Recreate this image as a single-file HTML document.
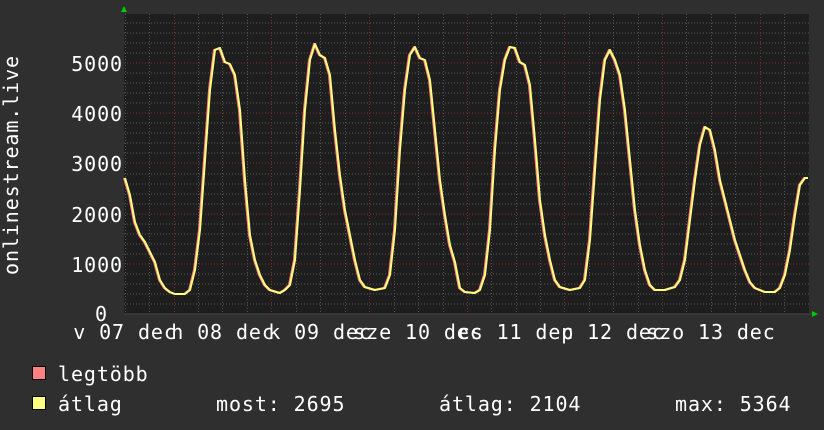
<!DOCTYPE html>
<html><head><meta charset="utf-8"><style>
html,body{margin:0;padding:0;background:#2f2f2f;width:824px;height:430px;overflow:hidden}
svg{display:block}
text{font-family:"DejaVu Sans Mono","Liberation Mono",monospace;font-size:20px;fill:#fff;letter-spacing:0.9px}
</style></head><body>
<svg width="824" height="430" xmlns="http://www.w3.org/2000/svg">
<rect width="824" height="430" fill="#2f2f2f"/>
<rect x="124" y="14" width="685" height="300" fill="#1e1e1e"/>
<g stroke="#555" stroke-width="1" stroke-dasharray="1,2" fill="none">
<path d="M124 304H809M124 294H809M124 284H809M124 274H809M124 254H809M124 244H809M124 234H809M124 224H809M124 204H809M124 194H809M124 184H809M124 174H809M124 153H809M124 143H809M124 133H809M124 123H809M124 103H809M124 93H809M124 83H809M124 73H809M124 53H809M124 43H809M124 33H809M124 23H809"/>
<path d="M125.5 14V314M149.5 14V314M198.5 14V314M222.5 14V314M247.5 14V314M296.5 14V314M320.5 14V314M345.5 14V314M394.5 14V314M418.5 14V314M443.5 14V314M491.5 14V314M516.5 14V314M540.5 14V314M589.5 14V314M613.5 14V314M638.5 14V314M686.5 14V314M711.5 14V314M735.5 14V314M784.5 14V314"/>
</g>
<g stroke="#7a3030" stroke-width="1" stroke-dasharray="1,2" fill="none">
<path d="M124 264H809M124 214H809M124 163H809M124 113H809M124 63H809"/>
<path d="M174.5 14V314M271.5 14V314M369.5 14V314M467.5 14V314M564.5 14V314M662.5 14V314M760.5 14V314"/>
</g>
<path d="M124 314H812" stroke="#444" stroke-width="1"/>
<polygon points="121,12 127,12 124,6" fill="#00cc00"/>
<polygon points="812,311 812,317 818,314" fill="#00cc00"/>
<g fill="none" stroke-linejoin="round">
<polyline stroke="#ff8080" stroke-width="2" transform="translate(-1,0)" points="125,178 130,195 135,222 140,235 145,242 150,252 155,262 160,280 165,288 170,292 175,294 185,294 190,290 195,270 200,230 205,160 210,90 215,50 220,48 225,62 230,64 235,75 240,110 245,180 250,235 255,260 260,275 265,285 270,290 280,293 285,290 290,285 295,260 300,190 305,110 310,60 315,44 320,55 325,58 330,75 335,130 340,175 345,210 350,235 355,260 360,280 365,287 375,290 385,288 390,275 395,230 400,150 405,90 410,55 415,47 420,58 425,60 430,80 435,130 440,180 445,215 450,245 455,262 460,288 465,292 475,293 480,290 485,275 490,230 495,150 500,90 505,60 510,47 515,48 520,62 525,65 530,85 535,140 540,200 545,235 550,260 555,280 560,287 570,290 580,288 585,280 590,240 595,170 600,100 605,60 610,50 615,60 620,75 625,110 630,160 635,210 640,245 645,270 650,285 655,290 665,290 675,287 680,280 685,260 690,220 695,180 700,145 705,127 710,130 715,150 720,180 725,200 730,220 735,240 740,255 745,270 750,282 755,288 765,292 775,292 780,288 785,275 790,250 795,215 800,185 805,178 808,178"/>
<polyline stroke="#ffff80" stroke-width="2" points="125,178 130,195 135,222 140,235 145,242 150,252 155,262 160,280 165,288 170,292 175,294 185,294 190,290 195,270 200,230 205,160 210,90 215,50 220,48 225,62 230,64 235,75 240,110 245,180 250,235 255,260 260,275 265,285 270,290 280,293 285,290 290,285 295,260 300,190 305,110 310,60 315,44 320,55 325,58 330,75 335,130 340,175 345,210 350,235 355,260 360,280 365,287 375,290 385,288 390,275 395,230 400,150 405,90 410,55 415,47 420,58 425,60 430,80 435,130 440,180 445,215 450,245 455,262 460,288 465,292 475,293 480,290 485,275 490,230 495,150 500,90 505,60 510,47 515,48 520,62 525,65 530,85 535,140 540,200 545,235 550,260 555,280 560,287 570,290 580,288 585,280 590,240 595,170 600,100 605,60 610,50 615,60 620,75 625,110 630,160 635,210 640,245 645,270 650,285 655,290 665,290 675,287 680,280 685,260 690,220 695,180 700,145 705,127 710,130 715,150 720,180 725,200 730,220 735,240 740,255 745,270 750,282 755,288 765,292 775,292 780,288 785,275 790,250 795,215 800,185 805,178 808,178"/>
</g>
<g text-anchor="end">
<text x="123" y="71">5000</text>
<text x="123" y="121">4000</text>
<text x="123" y="171">3000</text>
<text x="123" y="222">2000</text>
<text x="123" y="272">1000</text>
<text x="108" y="321">0</text>
</g>
<g text-anchor="middle">
<text x="125" y="339">v 07 dec</text>
<text x="223" y="339">h 08 dec</text>
<text x="320" y="339">k 09 dec</text>
<text x="418" y="339">sze 10 dec</text>
<text x="516" y="339">cs 11 dec</text>
<text x="613" y="339">p 12 dec</text>
<text x="711" y="339">szo 13 dec</text>
</g>
<text transform="translate(18,165) rotate(-90)" text-anchor="middle">onlinestream.live</text>
<rect x="32.5" y="366.5" width="13" height="13" fill="#ff8080" stroke="#000"/>
<rect x="32.5" y="396.5" width="13" height="13" fill="#ffff80" stroke="#000"/>
<text x="58" y="381">legtöbb</text>
<text x="58" y="411">átlag</text>
<text x="216" y="411">most: 2695</text>
<text x="439" y="411">átlag: 2104</text>
<text x="675" y="411">max: 5364</text>
</svg>
</body></html>
